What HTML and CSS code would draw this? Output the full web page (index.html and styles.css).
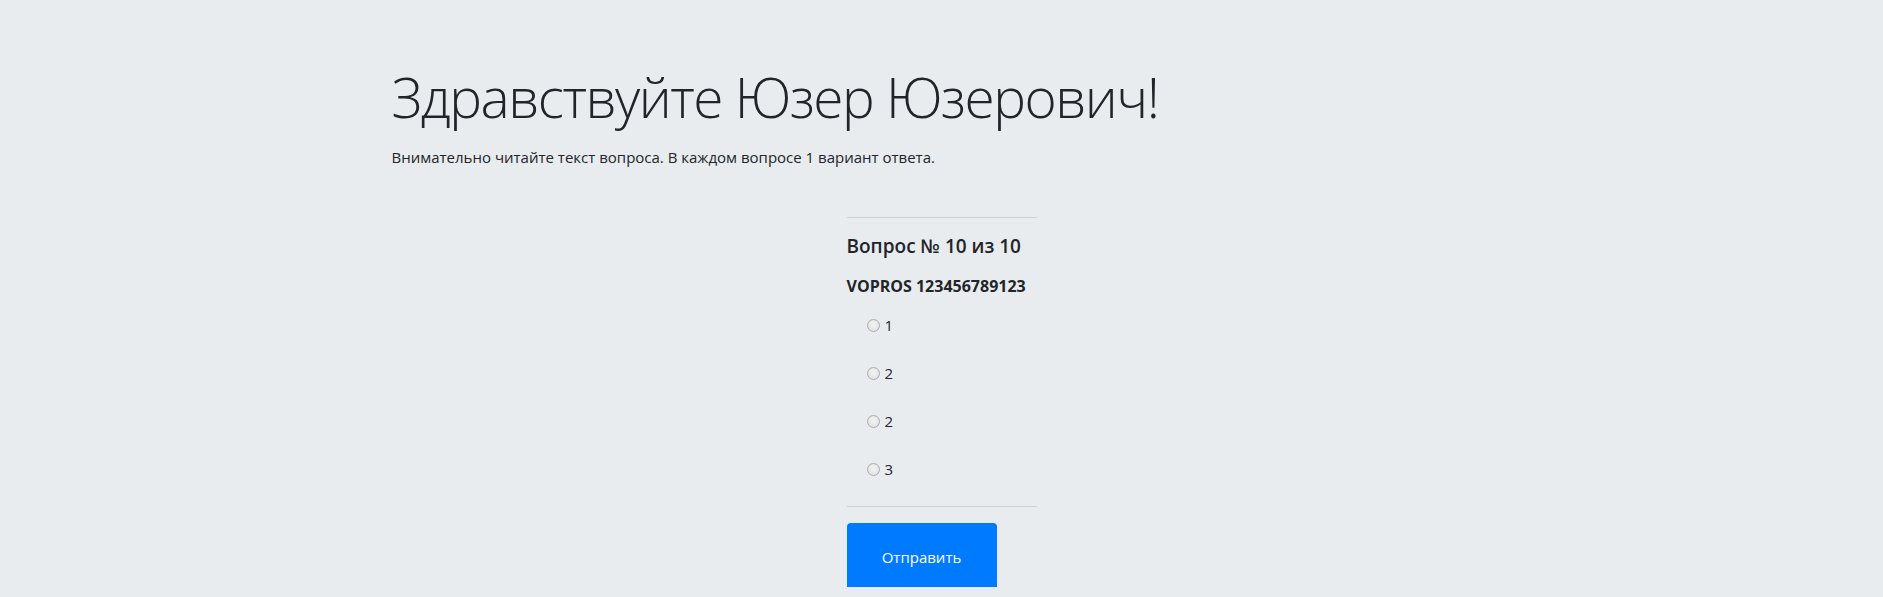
FILE: index.html
```html
<!DOCTYPE html>
<html lang="ru">
<head>
<meta charset="utf-8">
<title>Тест</title>
<link rel="stylesheet" href="styles.css">
</head>
<body>
<div class="jumbotron">
  <div class="container">
    <h1 class="display">Здравствуйте Юзер Юзерович!</h1>
    <p class="lead-text">Внимательно читайте текст вопроса. В каждом вопросе 1 вариант ответа.</p>
    <form class="quiz">
      <hr class="sep">
      <h5 class="q-num">Вопрос № 10 из 10</h5>
      <h6 class="q-text">VOPROS 123456789123</h6>
      <div class="options">
        <label class="opt"><input type="radio" name="a" value="1"><span>1</span></label>
        <label class="opt"><input type="radio" name="a" value="2"><span>2</span></label>
        <label class="opt"><input type="radio" name="a" value="3"><span>2</span></label>
        <label class="opt"><input type="radio" name="a" value="4"><span>3</span></label>
      </div>
      <hr class="sep sep-bottom">
      <button type="button" class="btn-send">Отправить</button>
    </form>
  </div>
</div>
</body>
</html>
```

FILE: styles.css
```css
html, body {
  margin: 0;
  padding: 0;
  background: #e9ecef;
}
body {
  font-family: "Open Sans", "Noto Sans", sans-serif;
  color: #212529;
  font-size: 16px;
  line-height: 24px;
}
.jumbotron {
  padding-top: 63px;
  height: 534px;
}
.container {
  width: 1140px;
  margin: 0 auto;
  padding: 0 20px;
  box-sizing: border-box;
}
.display {
  margin: 0;
  font-size: 55px;
  line-height: 67px;
  font-weight: 300;
  letter-spacing: -1.5px;
}
.lead-text {
  margin: 15px 0 0 0;
  font-size: 15px;
}
.quiz {
  width: 190px;
  margin: 48px auto 0;
}
.sep {
  margin: 0;
  border: 0;
  border-top: 1px solid #cfd2d5;
}
.q-num {
  margin: 16px 0 0 0;
  font-size: 19px;
  line-height: 24px;
  font-weight: 600;
}
.q-text {
  margin: 16px 0 0 0;
  font-size: 16px;
  line-height: 24px;
  font-weight: 700;
}
.options {
  display: flex;
  flex-direction: column;
  gap: 24px;
  margin-top: 15px;
  padding-left: 20px;
}
.opt {
  display: flex;
  align-items: center;
  gap: 5px;
  height: 24px;
  font-size: 15px;
}
.opt input {
  appearance: none;
  -webkit-appearance: none;
  margin: 0;
  width: 13px;
  height: 13px;
  border-radius: 50%;
  border: 1px solid #a9abad;
  background: radial-gradient(circle at 50% 40%, #f4f4f4 0%, #dcdcdc 100%);
  box-sizing: border-box;
}
.sep-bottom {
  margin-top: 25px;
}
.btn-send {
  display: block;
  margin-top: 16px;
  width: 150px;
  height: 64px;
  border: 0;
  border-radius: 4px 4px 0 0;
  background: #007bff;
  color: #fff;
  font-family: "Open Sans", "Noto Sans", sans-serif;
  font-size: 15px;
  padding: 4px 0 0 0;
}
```
